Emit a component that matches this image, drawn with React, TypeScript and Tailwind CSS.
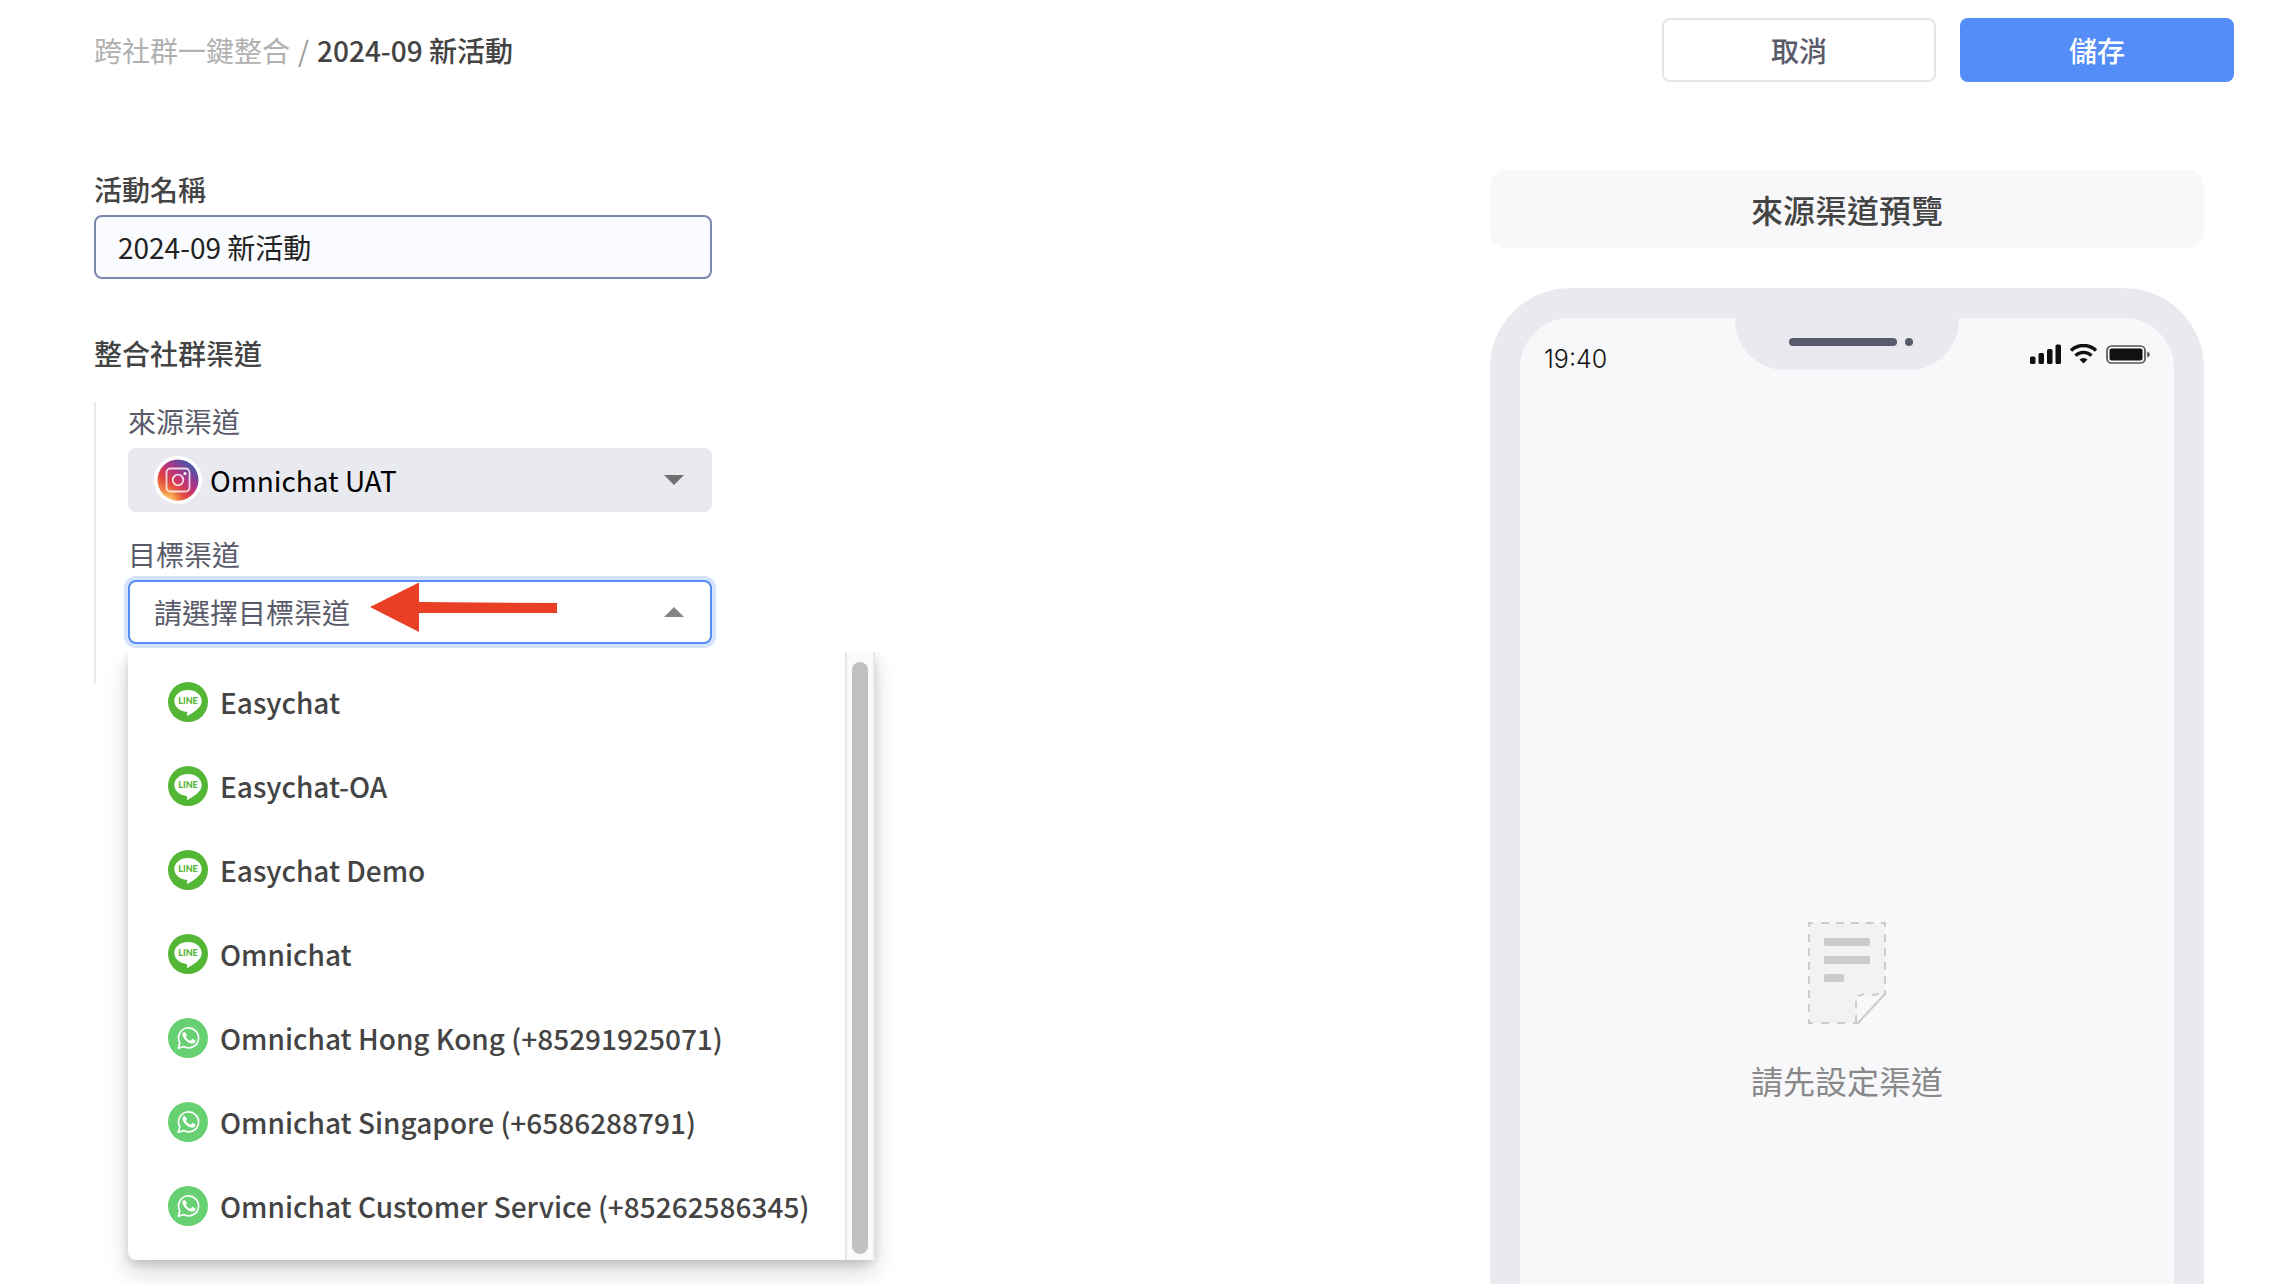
import { useState } from "react";
import type { MouseEvent } from "react";

type Channel = { name: string; kind: "line" | "whatsapp" };

const channels: Channel[] = [
  { name: "Easychat", kind: "line" },
  { name: "Easychat-OA", kind: "line" },
  { name: "Easychat Demo", kind: "line" },
  { name: "Omnichat", kind: "line" },
  { name: "Omnichat Hong Kong (+85291925071)", kind: "whatsapp" },
  { name: "Omnichat Singapore (+6586288791)", kind: "whatsapp" },
  { name: "Omnichat Customer Service (+85262586345)", kind: "whatsapp" },
];

function LineIcon() {
  return (
    <svg viewBox="0 0 40 40" className="size-10 shrink-0" aria-hidden="true">
      <circle cx="20" cy="20" r="20" fill="#54b635" />
      <path
        d="M20 8C12.4 8 6.3 12.9 6.3 19c0 5.4 4.8 10 11.4 10.8 1.3.2 1.6.8 1.5 1.900l-.2 1.500c0 .7.3.9 1 .5 2.600-1.400 8.200-5 11-8.200 1.900-2 2.700-4.200 2.700-6.500C33.700 12.900 27.600 8 20 8z"
        fill="#fff"
      />
      <text
        x="20"
        y="22"
        textAnchor="middle"
        fontFamily="Lato, sans-serif"
        fontWeight="900"
        fontSize="9"
        fill="#54b635"
      >
        LINE
      </text>
    </svg>
  );
}

function WhatsAppIcon() {
  return (
    <svg viewBox="0 0 40 40" className="size-10 shrink-0" aria-hidden="true">
      <circle cx="20" cy="20" r="20" fill="#67d072" />
      <path
        d="M10.300 30.200l1.500-5.500a10 10 0 1 1 3.900 3.900z"
        fill="none"
        stroke="#fff"
        strokeWidth="1.700"
        strokeLinejoin="round"
      />
      <path
        d="M17.200 14.700c-.3-.6-.5-.6-.9-.6-.7 0-1.900.9-1.900 2.700 0 1.500 1.100 3 1.300 3.200.2.300 2.200 3.500 5.400 4.800 2.700 1.100 3.300.8 3.900.7.700-.1 2-.8 2.200-1.600.3-.8.3-1.400.2-1.600l-2.600-1.300c-.4-.1-.6-.2-.8.200l-1.100 1.300c-.2.200-.4.300-.7.100-.9-.4-2.900-1.300-4.300-3.700-.2-.3 0-.5.2-.7l.8-1.100c.1-.2.100-.4 0-.6z"
        fill="#fff"
      />
    </svg>
  );
}

function InstagramIcon() {
  return (
    <svg viewBox="0 0 48 48" className="size-12" aria-hidden="true">
      <defs>
        <linearGradient id="ig-base" x1="0.150" y1="0.900" x2="0.850" y2="0.100">
          <stop offset="0" stopColor="#f9a24a" />
          <stop offset="0.300" stopColor="#e4433f" />
          <stop offset="0.600" stopColor="#b7327f" />
          <stop offset="0.850" stopColor="#6a4a9e" />
          <stop offset="1" stopColor="#3f5cab" />
        </linearGradient>
        <radialGradient id="ig-glow" cx="0.250" cy="1" r="0.500">
          <stop offset="0" stopColor="#fddb83" />
          <stop offset="0.400" stopColor="#f9a24a" stopOpacity="0.700" />
          <stop offset="1" stopColor="#e4433f" stopOpacity="0" />
        </radialGradient>
      </defs>
      <circle cx="24" cy="24" r="24" fill="#fff" />
      <circle cx="24" cy="24" r="20.500" fill="url(#ig-base)" />
      <circle cx="24" cy="24" r="20.500" fill="url(#ig-glow)" />
      <g fill="none" stroke="#fff" strokeOpacity="0.800" strokeWidth="1.800">
        <rect x="12.500" y="12.500" width="23" height="23" rx="4" />
        <circle cx="24" cy="24" r="5.300" />
      </g>
      <circle cx="31" cy="17.500" r="1.500" fill="#fff" />
    </svg>
  );
}

function DocumentIcon() {
  return (
    <svg viewBox="0 0 78 102" className="h-[102px] w-[78px]" aria-hidden="true">
      <path d="M1 1h76v71L49 101H1z" fill="#f2f2f2" />
      <path d="M49 101V76q0-3 3-3h25z" fill="#f8f8fa" />
      <g fill="none" stroke="#ccc" strokeWidth="2">
        <path d="M1 5V1h4M73 1h4v4M1 97v4h4" />
        <path d="M13 1h54" strokeDasharray="8 7" />
        <path d="M1 12v80M77 12v54" strokeDasharray="8 6" />
        <path d="M13 101h28" strokeDasharray="8 8" />
        <path d="M77 68v4L50 101h-5" />
        <path d="M48 100v-7M48 86v-7M50 74l6-2M64 73l7-1" />
      </g>
      <g fill="#cbcbcb">
        <rect x="16" y="16" width="46" height="8" rx="2" />
        <rect x="16" y="34" width="46" height="8" rx="2" />
        <rect x="16" y="52" width="20" height="8" rx="2" />
      </g>
    </svg>
  );
}

function StatusIcons() {
  return (
    <svg viewBox="0 0 120 20" className="h-5 w-[120px]" aria-hidden="true">
      <g fill="#111">
        <rect x="0" y="12.500" width="5.500" height="7.500" rx="1.500" />
        <rect x="8.500" y="9" width="5.500" height="11" rx="1.500" />
        <rect x="17" y="5" width="5.500" height="15" rx="1.500" />
        <rect x="25.500" y="0.500" width="5.500" height="19.500" rx="1.500" />
        <path d="M53.500 19.500l-4-4a6 6 0 0 1 8 0z" />
      </g>
      <g fill="none" stroke="#111" strokeWidth="3.400">
        <path d="M41 6.500a18 18 0 0 1 25 0" />
        <path d="M45.500 11.600a11.500 11.500 0 0 1 16 0" />
      </g>
      <rect x="77" y="2" width="38" height="17" rx="4.500" fill="none" stroke="#555" strokeWidth="1.700" />
      <rect x="79.500" y="4.500" width="33" height="12" rx="2" fill="#111" />
      <path d="M117.200 7.500v6q2.600-.8 2.600-3t-2.600-3z" fill="#555" />
    </svg>
  );
}

function Caret({ up = false }: { up?: boolean }) {
  return (
    <svg
      viewBox="0 0 20 10"
      className="pointer-events-none absolute top-1/2 right-7 h-[10px] w-5 -translate-y-1/2"
      aria-hidden="true"
    >
      {up ? <path d="M0 10L10 0l10 10z" fill="#858585" /> : <path d="M0 0l10 10L20 0z" fill="#707070" />}
    </svg>
  );
}

export default function App() {
  const [name, setName] = useState("2024-09 新活動");
  const [target, setTarget] = useState("");
  const [open, setOpen] = useState(true);

  const toggleMenu = (event: MouseEvent) => {
    event.preventDefault();
    setOpen(!open);
  };

  return (
    <div className="h-screen overflow-hidden bg-white font-['Noto_Sans_CJK_TC',sans-serif] text-[28px] leading-10 text-[#444]">
      <header className="flex items-center justify-between pt-[18px] pr-[50px] pl-[94px]">
        <nav className="flex gap-2 pb-px" aria-label="Breadcrumb">
          <a href="#campaigns" className="text-[#b0b0b0]">
            跨社群一鍵整合
          </a>
          <span className="text-[#999]">/</span>
          <span className="font-medium">2024-09 新活動</span>
        </nav>
        <div className="flex gap-6 font-medium">
          <button type="button" className="h-16 w-[274px] rounded-lg border-2 border-[#e6e6e6] text-[#5a5b6a]">
            取消
          </button>
          <button type="button" className="h-16 w-[274px] rounded-lg bg-[#548df7] text-white">
            儲存
          </button>
        </div>
      </header>

      <main className="flex items-start justify-between pt-[88px] pr-20 pl-[94px]">
        <form className="w-[618px] leading-[38px]">
          <label htmlFor="campaign-name" className="mb-[7px] block font-medium">
            活動名稱
          </label>
          <input
            id="campaign-name"
            value={name}
            onChange={(event) => setName(event.target.value)}
            className="block h-16 w-full rounded-lg border-2 border-[#7b88ad] bg-[#fafbfe] px-[22px] text-[#222] outline-none"
          />

          <h2 className="mt-[55px] font-medium">整合社群渠道</h2>
          <div className="mt-[30px] h-[282px] border-l-2 border-[#e9eaf0] pl-8 text-[#5a5b6a]">
            <label htmlFor="source-channel" className="mb-2 block">
              來源渠道
            </label>
            <div className="relative">
              <select
                id="source-channel"
                className="block h-16 w-full appearance-none rounded-lg bg-[#e9eaf0] pr-16 pl-[82px] text-black outline-none"
              >
                <option>Omnichat UAT</option>
              </select>
              <span className="pointer-events-none absolute top-2 left-[26px]">
                <InstagramIcon />
              </span>
              <Caret />
            </div>

            <label htmlFor="target-channel" className="mt-[23px] mb-[7px] block">
              目標渠道
            </label>
            <div className="relative">
              <select
                id="target-channel"
                value={target}
                onChange={(event) => setTarget(event.target.value)}
                onMouseDown={toggleMenu}
                className="block h-16 w-full appearance-none rounded-lg border-2 border-[#548df7] bg-white pr-16 pl-6 ring-4 ring-[#d6e3fd] outline-none"
              >
                <option value="">請選擇目標渠道</option>
                {channels.map((channel) => (
                  <option key={channel.name}>{channel.name}</option>
                ))}
              </select>
              <Caret up={open} />
              <svg
                viewBox="0 0 187 50"
                className="pointer-events-none absolute top-[2px] left-[242px] h-[50px] w-[187px]"
                aria-hidden="true"
              >
                <path d="M0 25L49 0.500v19.500l138 1v10H49v19z" fill="#e94025" />
              </svg>

              {open && (
                <div className="absolute top-full left-0 mt-2 flex rounded-b-lg bg-white text-[#444] shadow-[0_12px_24px_rgba(0,0,0,0.16),0_4px_8px_rgba(0,0,0,0.14)] [clip-path:inset(0_-40px_-40px_-40px)]">
                  <ul role="listbox" aria-label="目標渠道" className="w-[717px] pt-2 pb-3 font-medium">
                    {channels.map((channel) => (
                      <li key={channel.name} role="option" aria-selected={channel.name === target}>
                        <button
                          type="button"
                          className="flex h-[84px] w-full items-center gap-3 px-10 whitespace-nowrap"
                          onClick={() => {
                            setTarget(channel.name);
                            setOpen(false);
                          }}
                        >
                          {channel.kind === "line" ? <LineIcon /> : <WhatsAppIcon />}
                          <span>{channel.name}</span>
                        </button>
                      </li>
                    ))}
                  </ul>
                  <div className="flex w-[30px] justify-center border-x-2 border-[#e8e8e8] bg-[#fafafa] pt-[10px] pb-[6px]">
                    <div className="w-4 rounded-full bg-[#c1c1c1]" />
                  </div>
                </div>
              )}
            </div>
          </div>
        </form>

        <aside className="w-[714px]">
          <h2 className="flex h-[78px] items-center justify-center rounded-2xl bg-[#f8f8fa] text-[32px] font-medium">
            來源渠道預覽
          </h2>
          <div className="mt-10 h-[1384px] rounded-[80px] bg-[#e9eaf0] p-[30px]">
            <div className="flex h-full flex-col rounded-[50px] bg-[#f8f8fa]">
              <div className="grid grid-cols-[1fr_224px_1fr] items-start">
                <span className="pt-[21px] pl-6 font-['Inter',sans-serif] text-[25px] leading-10 font-light text-[#111]">
                  19:40
                </span>
                <div className="flex h-[52px] justify-center gap-2 rounded-b-[50px] bg-[#e9eaf0] pt-5 pl-2">
                  <span className="h-2 w-[108px] rounded-full bg-[#5a5b6a]" />
                  <span className="size-2 rounded-full bg-[#5a5b6a]" />
                </div>
                <div className="flex justify-end pt-[26px] pr-6">
                  <StatusIcons />
                </div>
              </div>
              <div className="flex flex-1 flex-col items-center justify-center gap-9 text-[32px] leading-10 text-[#888]">
                <DocumentIcon />
                <p>請先設定渠道</p>
              </div>
            </div>
          </div>
        </aside>
      </main>
    </div>
  );
}
